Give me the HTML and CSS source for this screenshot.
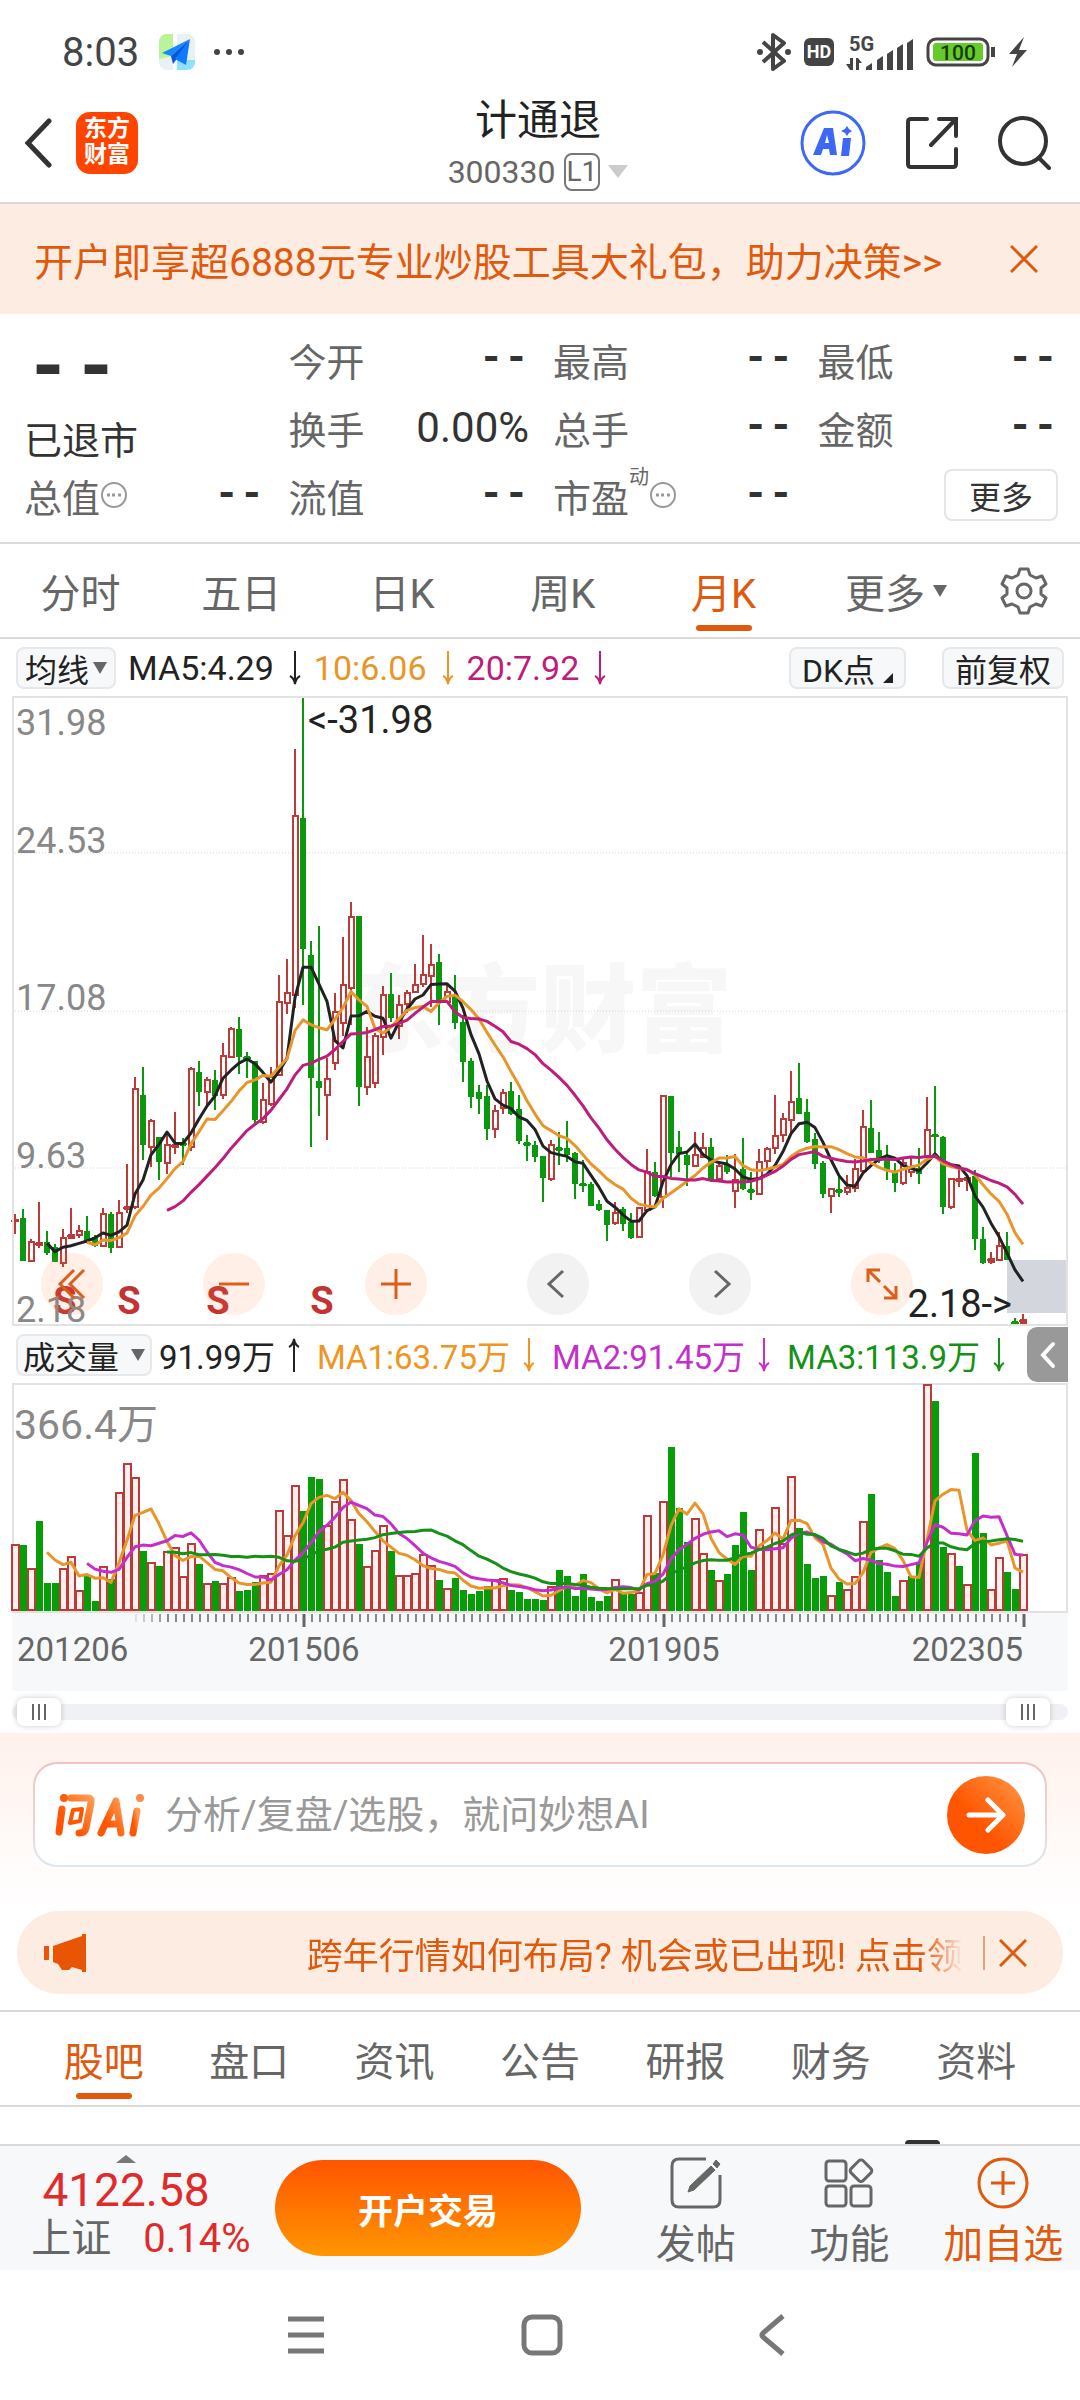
FILE: index.html
```html
<!DOCTYPE html>
<html lang="zh-CN">
<head>
  <meta charset="UTF-8" />
  <meta name="viewport" content="width=device-width, initial-scale=1" />
  <title>计通退 300330</title>
  <link rel="stylesheet" href="styles.css">
</head>
<body>
  <svg class="defs" width="0" height="0" aria-hidden="true">
    <symbol id="down" viewBox="0 0 14 36"><path d="M7 1v32M2 26q4 2 5 8q1-6 5-8" fill="none" stroke="currentColor" stroke-width="2" /></symbol>
    <symbol id="up" viewBox="0 0 14 36"><path d="M7 35V3M2 10q4-2 5-8q1 6 5 8" fill="none" stroke="currentColor" stroke-width="2" /></symbol>
    <symbol id="close" viewBox="0 0 28 28"><path d="M1 1l26 26M27 1L1 27" fill="none" stroke="currentColor" stroke-width="3" /></symbol>
    <symbol id="info" viewBox="0 0 28 28"><circle cx="14" cy="14" r="12" fill="none" stroke="#999" stroke-width="2" /><path d="M7 14h3M12 14h3M18 14h3" stroke="#999" stroke-width="3" /></symbol>
    <linearGradient id="fire" x1="0" y1="1" x2="1" y2="0"><stop offset="0.3" stop-color="#ff5500" /><stop offset="1" stop-color="#ff9a50" /></linearGradient>
  </svg>

  <div class="status">
    <span class="clock">8:03</span>
    <svg class="map-icon" width="36" height="36" viewBox="0 0 36 36">
      <rect width="36" height="36" rx="8" fill="#e9f1f2" />
      <path d="M8 0h6v22L0 25V8a8 8 0 0 1 8-8z" fill="#b9f39a" />
      <path d="M18 26h18v2a8 8 0 0 1-8 8H18z" fill="#8fe0ff" />
      <path d="M14 0h4v36h-4z" fill="#fff" />
      <path d="M31 5L3 19l9 3z" fill="#1388ff" /><path d="M31 5L12 22l2 8 3-4z" fill="#0a55d8" /><path d="M31 5L16 25l11 6z" fill="#0d7bff" />
    </svg>
    <svg width="32" height="8" viewBox="0 0 32 8" fill="#444"><circle cx="4" cy="4" r="3" /><circle cx="16" cy="4" r="3" /><circle cx="28" cy="4" r="3" /></svg>
    <div class="status-right">
      <svg width="36" height="38" viewBox="0 0 36 38"><path d="M7 9l21 19-11 8V2l11 8L7 29" fill="none" stroke="#444" stroke-width="4" stroke-linejoin="round" /><circle cx="4" cy="19" r="3" fill="#444" /><circle cx="32" cy="19" r="3" fill="#444" /></svg>
      <span class="hd">HD</span>
      <svg width="68" height="42" viewBox="0 -6 68 42" fill="#444">
        <text x="3" y="14" font-size="20" font-weight="700">5G</text>
        <path d="M4 21h3v12H4l-4-6h4zM10 33h3v-7h3l-4-5h-2z" />
        <path d="M20 33v-3l6-4v7zM31 23l6-4v14h-6zM41 17l6-4v20h-6zM51 11l6-4v26h-6zM61 6l6-4v31h-6z" />
      </svg>
      <svg width="70" height="32" viewBox="0 0 70 32">
        <rect x="2" y="3" width="60" height="26" rx="8" fill="#fff" stroke="#444" stroke-width="3" />
        <rect x="7" y="7" width="50" height="18" rx="3" fill="#66c92c" />
        <path d="M67 11v10" stroke="#444" stroke-width="4" />
        <text x="32" y="24" font-size="21" font-weight="500" text-anchor="middle" fill="#173c06">100</text>
      </svg>
      <svg width="20" height="30" viewBox="0 0 20 30"><path d="M16 0L1 17h8L4 30 19 13h-8z" fill="#444" /></svg>
    </div>
  </div>

  <header class="header">
    <div class="header-left">
      <button class="plain" aria-label="返回"><svg width="28" height="50" viewBox="0 0 28 50"><path d="M25 3L4 25l21 22" fill="none" stroke="#333" stroke-width="5" stroke-linecap="round" /></svg></button>
      <span class="logo">东方<br>财富</span>
    </div>
    <div class="header-title">
      <h1>计通退</h1>
      <p>300330 <span class="level">L1</span> <svg width="20" height="14" viewBox="0 0 20 14"><path d="M0 0h20L10 13z" fill="#ccc" /></svg></p>
    </div>
    <div class="header-right">
      <button class="plain" aria-label="AI助手"><svg width="66" height="66" viewBox="0 0 66 66">
        <circle cx="33" cy="33" r="31" fill="none" stroke="#3d68f5" stroke-width="3" />
        <path d="M24 18h9l4 27h-7l-1-6h-6l-2 6h-8zM27 25l-2 8h4z" fill="#3d68f5" fill-rule="evenodd" />
        <path d="M43 28h8l-2 18h-8zM47 16l2 3 3 2-3 2-2 3-2-3-4-2 4-2z" fill="#3d68f5" />
      </svg></button>
      <button class="plain" aria-label="分享"><svg width="52" height="52" viewBox="0 0 52 52"><path d="M21 2H5q-3 0-3 3v42q0 3 3 3h42q3 0 3-3V32M33 2h17v17M50 2L25 28" fill="none" stroke="#333" stroke-width="4" stroke-linecap="round" /></svg></button>
      <button class="plain" aria-label="搜索"><svg width="54" height="54" viewBox="0 0 54 54"><circle cx="25" cy="25" r="23" fill="none" stroke="#333" stroke-width="4" /><path d="M41 42l10 10" stroke="#333" stroke-width="4" stroke-linecap="round" /></svg></button>
    </div>
  </header>

  <div class="banner">
    <a href="#">开户即享超6888元专业炒股工具大礼包，助力决策&gt;&gt;</a>
    <button class="plain" aria-label="关闭"><svg width="28" height="28"><use href="#close" /></svg></button>
  </div>

  <section class="quote">
    <div class="price"><strong class="dash">--</strong><span>已退市</span></div>
    <div class="cell"><span>今开</span><b class="dash">--</b></div>
    <div class="cell"><span>最高</span><b class="dash">--</b></div>
    <div class="cell"><span>最低</span><b class="dash">--</b></div>
    <div class="cell"><span>换手</span><em>0.00%</em></div>
    <div class="cell"><span>总手</span><b class="dash">--</b></div>
    <div class="cell"><span>金额</span><b class="dash">--</b></div>
    <div class="cell"><span>总值</span><svg width="28" height="28"><use href="#info" /></svg><b class="dash">--</b></div>
    <div class="cell"><span>流值</span><b class="dash">--</b></div>
    <div class="cell"><span>市盈</span><sup>动</sup><svg width="28" height="28"><use href="#info" /></svg><b class="dash">--</b></div>
    <div class="cell"><button class="more">更多</button></div>
  </section>

  <nav class="periods">
    <a href="#">分时</a>
    <a href="#">五日</a>
    <a href="#">日K</a>
    <a href="#">周K</a>
    <a href="#" class="active">月K</a>
    <a href="#">更多<svg width="14" height="12" viewBox="0 0 14 12"><path d="M0 0h14L7 12z" fill="#666" /></svg></a>
    <button class="plain" aria-label="设置"><svg width="48" height="48" viewBox="0 0 48 48"><path d="M20 2h8l2 6 6 3 6-2 4 8-5 4v6l5 4-4 8-6-2-6 3-2 6h-8l-2-6-6-3-6 2-4-8 5-4v-6l-5-4 4-8 6 2 6-3z" fill="none" stroke="#666" stroke-width="3" stroke-linejoin="round" /><circle cx="24" cy="24" r="7" fill="none" stroke="#666" stroke-width="3" /></svg></button>
  </nav>

  <div class="legend">
    <button class="chip">均线<svg width="14" height="12" viewBox="0 0 14 12"><path d="M0 0h14L7 12z" fill="#666" /></svg></button>
    <span class="ma ma-black">MA5:4.29<svg width="14" height="36"><use href="#down" /></svg></span>
    <span class="ma ma-orange">10:6.06<svg width="14" height="36"><use href="#down" /></svg></span>
    <span class="ma ma-pink">20:7.92<svg width="14" height="36"><use href="#down" /></svg></span>
    <div class="legend-right">
      <button class="chip">DK点<svg class="corner" width="10" height="10" viewBox="0 0 10 10"><path d="M10 0v10H0z" fill="#222" /></svg></button>
      <button class="chip">前复权</button>
    </div>
  </div>

  <div class="chart">
    <svg id="kline" viewBox="0 0 1056 630"></svg>
    <div class="tools">
      <button aria-label="展开"><svg width="32" height="32" viewBox="0 0 32 32"><path d="M18 2L4 16l14 14M28 2L14 16l14 14" /></svg></button>
      <button aria-label="缩小"><svg width="32" height="32" viewBox="0 0 32 32"><path d="M1 16h30" /></svg></button>
      <button aria-label="放大"><svg width="32" height="32" viewBox="0 0 32 32"><path d="M1 16h30M16 1v30" /></svg></button>
      <button class="grey" aria-label="向左"><svg width="32" height="32" viewBox="0 0 32 32"><path d="M21 3L7 16l14 13" /></svg></button>
      <button class="grey" aria-label="向右"><svg width="32" height="32" viewBox="0 0 32 32"><path d="M11 3l14 13-14 13" /></svg></button>
      <button aria-label="全屏"><svg width="32" height="32" viewBox="0 0 32 32"><path d="M2 14V2h12M2 2l12 12M30 18v12H18M30 30L18 18" /></svg></button>
    </div>
  </div>

  <div class="legend legend-vol">
    <button class="chip">成交量<svg width="14" height="12" viewBox="0 0 14 12"><path d="M0 0h14L7 12z" fill="#666" /></svg></button>
    <span class="ma ma-black">91.99万<svg width="14" height="36"><use href="#up" /></svg></span>
    <span class="ma ma-amber">MA1:63.75万<svg width="14" height="36"><use href="#down" /></svg></span>
    <span class="ma ma-purple">MA2:91.45万<svg width="14" height="36"><use href="#down" /></svg></span>
    <span class="ma ma-green">MA3:113.9万<svg width="14" height="36"><use href="#down" /></svg></span>
    <button class="fold" aria-label="收起"><svg width="16" height="28" viewBox="0 0 16 28"><path d="M13 3L3 14l10 11" fill="none" stroke="#fff" stroke-width="4" stroke-linecap="round" /></svg></button>
  </div>

  <div class="chart">
    <svg id="volume" viewBox="0 0 1056 308"></svg>
  </div>

  <div class="range">
    <input type="range" min="0" max="100" value="0" aria-label="开始月份">
    <input type="range" min="0" max="100" value="100" aria-label="结束月份">
  </div>

  <section class="ask">
    <form class="ask-box">
      <svg class="ask-logo" width="90" height="44" viewBox="0 0 90 44">
        <g fill="none" stroke="url(#fire)" stroke-width="7" stroke-linecap="round" stroke-linejoin="round">
          <path d="M7 16L4 39M16 5h17q4 0 3 5l-5 25q-1 5-7 5" />
          <path d="M46 40L61 8l5 32M52 31h12" />
          <path d="M82 18l-4 22" />
        </g>
        <path d="M18 17l-3 13 10-2 2-12z" fill="none" stroke="#ff5500" stroke-width="4" stroke-linejoin="round" />
        <circle cx="9" cy="5" r="4" fill="#ff5c0a" /><circle cx="85" cy="5" r="4" fill="#ff8a4a" />
      </svg>
      <input type="text" placeholder="分析/复盘/选股，就问妙想AI" aria-label="问AI">
      <button class="send" aria-label="发送"><svg width="40" height="36" viewBox="0 0 40 36"><path d="M3 18h33M22 3l15 15-15 15" fill="none" stroke="#fff" stroke-width="5" stroke-linecap="round" stroke-linejoin="round" /></svg></button>
    </form>
  </section>

  <div class="notice">
    <svg width="44" height="38" viewBox="0 0 44 38" fill="#e85605"><path d="M0 12h5v14H0zM9 12L38 2V0h4v38h-4v-2l-10-3-3 3h-7l-4-6-5-2z" /></svg>
    <div class="notice-text"><a href="#">跨年行情如何布局? 机会或已出现! 点击领</a></div>
    <button class="plain" aria-label="关闭"><svg width="28" height="28"><use href="#close" /></svg></button>
  </div>

  <nav class="tabs">
    <a href="#" class="active">股吧</a>
    <a href="#">盘口</a>
    <a href="#">资讯</a>
    <a href="#">公告</a>
    <a href="#">研报</a>
    <a href="#">财务</a>
    <a href="#">资料</a>
  </nav>

  <main class="feed"><span class="feed-icon"></span></main>

  <footer class="bottom">
    <a href="#" class="index">
      <svg width="20" height="8" viewBox="0 0 20 8"><path d="M10 0l10 8H0z" fill="#777" /></svg>
      <strong>4122.58</strong>
      <span class="index-row"><span>上证</span><em>0.14%</em></span>
    </a>
    <button class="trade">开户交易</button>
    <div class="actions">
      <a href="#"><svg width="52" height="52" viewBox="0 0 52 52"><path d="M36 2H9q-7 0-7 7v34q0 7 7 7h34q7 0 7-7V18" fill="none" stroke="#666" stroke-width="3" /><path d="M41 9l4 4-21 20-6 2 2-6zM43 7l3-4 4 4-3 4z" fill="#666" stroke="#666" /></svg>发帖</a>
      <a href="#"><svg width="52" height="52" viewBox="0 0 52 52" fill="none" stroke="#666" stroke-width="3"><rect x="3" y="4" width="20" height="20" rx="3" /><rect x="3" y="29" width="20" height="20" rx="3" /><rect x="28" y="29" width="20" height="20" rx="3" /><rect x="30" y="5" width="17" height="17" rx="3" transform="rotate(45 38 13)" /></svg>功能</a>
      <a href="#" class="add"><svg width="52" height="52" viewBox="0 0 52 52" fill="none" stroke="#e05a0e" stroke-width="3"><circle cx="26" cy="26" r="24" /><path d="M14 26h24M26 14v24" /></svg>加自选</a>
    </div>
  </footer>

  <div class="sysnav">
    <button class="plain" aria-label="任务"><svg width="40" height="40" viewBox="0 0 40 40"><path d="M2 4h36M2 20h36M2 36h36" stroke="#777" stroke-width="5" /></svg></button>
    <button class="plain" aria-label="主页"><svg width="42" height="42" viewBox="0 0 42 42"><rect x="3" y="3" width="36" height="36" rx="8" fill="none" stroke="#777" stroke-width="5" /></svg></button>
    <button class="plain" aria-label="后退"><svg width="28" height="42" viewBox="0 0 28 42"><path d="M25 2L5 19q-2 2 0 4l20 17" fill="none" stroke="#777" stroke-width="5" /></svg></button>
  </div>

  <script src="chart.js"></script>
</body>
</html>
```
FILE: styles.css
```css
* {
  box-sizing: border-box;
  margin: 0;
  padding: 0;
}
body {
  font-family: Roboto, "Noto Sans CJK SC", sans-serif;
  background: #fff;
  color: #333;
  min-height: 100vh;
  display: flex;
  flex-direction: column;
}
a {
  color: inherit;
  text-decoration: none;
}
em {
  font-style: normal;
}
svg {
  display: block;
  flex: none;
}
button,
input {
  font-family: inherit;
  color: inherit;
  border: none;
}
button {
  cursor: pointer;
}
.defs {
  position: absolute;
}
.plain {
  background: none;
  display: flex;
  align-items: center;
  justify-content: center;
}

/* status bar */
.status {
  height: 92px;
  padding: 12px 52px 0 62px;
  display: flex;
  align-items: center;
  gap: 18px;
}
.clock {
  font-size: 40px;
  color: #444;
}
.map-icon {
  margin-left: 2px;
}
.status-right {
  margin-left: auto;
  display: flex;
  align-items: center;
  gap: 12px;
}
.hd {
  width: 30px;
  height: 28px;
  border-radius: 6px;
  background: #444;
  color: #fff;
  font-size: 18px;
  font-weight: 700;
  line-height: 28px;
  text-align: center;
}

/* header */
.header {
  padding: 0 28px 8px 24px;
  display: grid;
  grid-template-columns: 1fr auto 1fr;
  align-items: center;
  border-bottom: 2px solid #d9d9d9;
}
.header-left,
.header-right {
  display: flex;
  align-items: center;
}
.header-left {
  gap: 24px;
}
.header-right {
  justify-content: flex-end;
  gap: 40px;
}
.logo {
  width: 62px;
  height: 62px;
  border-radius: 14px;
  background: #ff4400;
  color: #fff;
  font-size: 23px;
  font-weight: 700;
  line-height: 26px;
  padding-top: 4px;
  text-align: center;
}
.header-title h1 {
  font-size: 42px;
  line-height: 58px;
  font-weight: 400;
  text-align: center;
  color: #222;
}
.header-title p {
  display: flex;
  align-items: center;
  gap: 8px;
  font-size: 32px;
  line-height: 44px;
  color: #666;
}
.level {
  border: 2px solid #777;
  border-radius: 8px;
  padding: 0 1px;
  font-size: 28px;
  line-height: 34px;
}

/* promo banner */
.banner {
  height: 110px;
  padding: 0 42px 0 34px;
  display: flex;
  align-items: center;
  justify-content: space-between;
  background: #fcece2;
  color: #e05a0e;
  font-size: 39px;
  white-space: nowrap;
}

/* quote */
.quote {
  padding: 11px 22px 13px 24px;
  display: grid;
  grid-template-columns: repeat(4, 1fr);
  grid-auto-rows: 68px;
  column-gap: 24px;
  font-size: 38px;
  border-bottom: 2px solid #d9d9d9;
}
.price {
  grid-row: span 2;
  display: flex;
  flex-direction: column;
}
.price strong {
  font-size: 80px;
  line-height: 88px;
}
.price span {
  line-height: 56px;
}
.dash {
  font-family: "Liberation Mono", monospace;
}
.cell {
  display: flex;
  align-items: center;
  color: #666;
  white-space: nowrap;
}
.cell b,
.cell em {
  margin-left: auto;
  font-size: 42px;
  color: #333;
}
.cell sup {
  font-size: 20px;
  align-self: flex-start;
}
.more {
  margin-left: auto;
  width: 114px;
  height: 52px;
  border: 2px solid #e5e5e5;
  border-radius: 8px;
  background: #fff;
  color: #333;
  font-size: 32px;
}

/* period tabs */
.periods {
  height: 95px;
  padding-right: 20px;
  display: grid;
  grid-template-columns: repeat(5, 1fr) 184px 72px;
  border-bottom: 2px solid #d9d9d9;
}
.periods a,
.tabs a {
  position: relative;
  display: flex;
  align-items: center;
  justify-content: center;
  gap: 8px;
  font-size: 40px;
  color: #666;
}
.periods a.active,
.tabs a.active {
  color: #e05a0e;
}
.periods a.active::after,
.tabs a.active::after {
  content: "";
  position: absolute;
  left: 50%;
  bottom: 6px;
  width: 56px;
  height: 6px;
  margin-left: -28px;
  border-radius: 3px;
  background: #e05a0e;
}

/* chart legends */
.legend {
  height: 57px;
  padding: 0 16px;
  display: flex;
  align-items: center;
  gap: 12px;
  font-size: 34px;
  white-space: nowrap;
}
.chip {
  height: 42px;
  padding: 0 7px;
  display: flex;
  align-items: center;
  gap: 4px;
  border: 2px solid #e6e8ec;
  border-radius: 8px;
  background: #f7f8fa;
  color: #222;
  font-size: 32px;
}
.corner {
  align-self: flex-end;
  margin-bottom: 4px;
}
.ma {
  display: flex;
  align-items: center;
  gap: 14px;
}
.ma-black { color: #222; }
.ma-orange { color: #e8962a; }
.ma-pink { color: #bd1d7b; }
.ma-amber { color: #f0961e; }
.ma-purple { color: #c42fcb; }
.ma-green { color: #159215; }
.legend-right {
  margin-left: auto;
  display: flex;
  gap: 36px;
}
.legend-right .chip {
  padding: 0 11px;
  gap: 8px;
}
.legend-vol {
  padding-right: 12px;
  gap: 16px;
  font-size: 33px;
}
.legend-vol .chip {
  padding: 0 5px;
  gap: 12px;
}
.legend-vol .ma {
  gap: 12px;
}
.legend-vol .ma-black {
  margin-left: -9px;
}
.fold {
  flex: none;
  margin-left: auto;
  width: 41px;
  height: 55px;
  border-radius: 10px 0 0 10px;
  background: #999;
  display: flex;
  align-items: center;
  justify-content: center;
}

/* charts */
.chart {
  position: relative;
  margin: 0 12px;
}
.chart > svg {
  width: 100%;
  height: auto;
  overflow: visible;
}
.frame {
  fill: none;
  stroke: #e2e2e2;
  stroke-width: 2;
}
.grid {
  stroke: #d4d4d4;
  stroke-dasharray: 1 2;
}
.watermark {
  font-size: 96px;
  font-weight: 900;
  fill: #f7f7f7;
}
.scale {
  font-size: 36px;
  fill: #888;
}
.mark {
  font-size: 38px;
  fill: #222;
}
.split {
  font-size: 38px;
  font-weight: 700;
  fill: #c43333;
}
.unit {
  font-size: 41px;
  fill: #888;
}
.month {
  font-size: 33px;
  fill: #666;
}
.gap-zone {
  fill: #d3d7dd;
}
.up {
  fill: #fff;
  stroke: #bc3a38;
  stroke-width: 2;
}
.up-vol {
  fill: #fff0ee;
  stroke: #bc3a38;
  stroke-width: 2;
}
.down {
  fill: #0a980e;
  stroke: #0a980e;
  stroke-width: 2;
}
.down-vol {
  fill: #069d06;
}
.line {
  fill: none;
  stroke-width: 3;
  stroke-linejoin: round;
}
.tick {
  stroke: #888;
  stroke-width: 2;
}
.tick-major {
  stroke: #666;
  stroke-width: 3;
}
.axis {
  fill: #f7f8fa;
}
.tools {
  position: absolute;
  left: 29px;
  bottom: 11px;
  display: flex;
  gap: 100px;
}
.tools button {
  width: 62px;
  height: 62px;
  border-radius: 50%;
  background: rgba(255, 120, 50, 0.12);
  color: #d9601c;
  display: flex;
  align-items: center;
  justify-content: center;
}
.tools button.grey {
  background: #f2f2f2;
  color: #666;
}
.tools svg {
  fill: none;
  stroke: currentColor;
  stroke-width: 3;
}

/* range slider */
.range {
  height: 16px;
  margin: 13px 12px;
  padding: 0 18px 0 5px;
  display: flex;
  align-items: center;
  border-radius: 8px;
  background: #f0f1f4;
}
.range input {
  flex: 1;
  height: 28px;
  background: none;
  -webkit-appearance: none;
  appearance: none;
}
.range input::-webkit-slider-thumb {
  -webkit-appearance: none;
  width: 44px;
  height: 28px;
  border-radius: 7px;
  box-shadow: 0 0 6px rgba(0, 0, 0, 0.2);
  background:
    linear-gradient(#666, #666) 15px 6px / 2px 16px no-repeat,
    linear-gradient(#666, #666) 21px 6px / 2px 16px no-repeat,
    linear-gradient(#666, #666) 27px 6px / 2px 16px no-repeat,
    #fff;
}

/* ask ai */
.ask {
  padding: 29px 33px 44px;
  background: linear-gradient(#fff1ec, #fff);
}
.ask-box {
  height: 105px;
  padding: 0 20px;
  display: flex;
  align-items: center;
  gap: 20px;
  border: 2px solid transparent;
  border-radius: 24px;
  background:
    linear-gradient(#fff, #fff) padding-box,
    linear-gradient(#f1c3b8, #dfe6ef) border-box;
}
.ask-box input {
  flex: 1;
  min-width: 0;
  height: 60px;
  font-size: 38px;
  background: none;
  outline: none;
}
.ask-box input::placeholder {
  color: #999;
}
.send {
  width: 78px;
  height: 78px;
  border-radius: 50%;
  background: linear-gradient(45deg, #ff5500 40%, #ff9a48);
  display: flex;
  align-items: center;
  justify-content: center;
}

/* scrolling notice */
.notice {
  height: 83px;
  margin: 0 17px 16px;
  padding: 0 36px 0 27px;
  display: flex;
  align-items: center;
  border-radius: 42px;
  background: #fcece2;
  color: #e05a0e;
  font-size: 36px;
}
.notice-text {
  flex: 1;
  overflow: hidden;
  white-space: nowrap;
  text-align: right;
  margin-right: 20px;
  -webkit-mask-image: linear-gradient(to left, transparent, #000 40px);
  mask-image: linear-gradient(to left, transparent, #000 40px);
}
.notice .plain {
  height: 34px;
  padding-left: 14px;
  border-left: 2px solid #e9a27b;
}

/* section tabs */
.tabs {
  height: 97px;
  padding: 0 31px;
  display: grid;
  grid-template-columns: repeat(7, 1fr);
  border-top: 2px solid #d9d9d9;
  border-bottom: 2px solid #d9d9d9;
}
.feed {
  flex: 1 0 36px;
  display: flex;
  justify-content: flex-end;
  align-items: flex-end;
  padding-right: 140px;
}
.feed-icon {
  width: 35px;
  height: 4px;
  border-radius: 6px 6px 0 0;
  background: #333;
}

/* bottom bar */
.bottom {
  height: 126px;
  display: flex;
  align-items: center;
  border-top: 2px solid #d9d9d9;
  background: #f7f8fa;
}
.index {
  width: 275px;
  padding-right: 23px;
  display: flex;
  flex-direction: column;
  align-items: center;
  color: #e02b2b;
}
.index strong {
  font-size: 46px;
  font-weight: 400;
  line-height: 54px;
}
.index-row {
  margin-left: 30px;
  display: flex;
  gap: 32px;
  font-size: 40px;
  line-height: 44px;
}
.index-row span {
  color: #666;
}
.trade {
  width: 306px;
  height: 96px;
  border-radius: 48px;
  background: linear-gradient(#ff5500, #ff9500);
  color: #fff;
  font-size: 35px;
  font-weight: 700;
}
.actions {
  flex: 1;
  margin-left: 38px;
  padding-top: 12px;
  display: grid;
  grid-template-columns: repeat(3, 1fr);
}
.actions a {
  display: flex;
  flex-direction: column;
  align-items: center;
  gap: 10px;
  font-size: 40px;
  line-height: 52px;
  color: #666;
  white-space: nowrap;
}
.actions a.add {
  color: #e05a0e;
}

/* system buttons */
.sysnav {
  height: 130px;
  padding: 0 294px 0 286px;
  display: flex;
  align-items: center;
  justify-content: space-between;
}
```
FILE: chart.js
```js
// [direction, high, body top, body bottom, low, volume, volume direction if different]
const months = [
  ["r",518,524,525,538,67],["g",513,523,564,564,66],["r",543,546,565,565,43],["r",506,547,549,552,90,"g"],
  ["g",535,547,556,559,28],["g",548,552,565,566,28],["r",533,542,567,571,43],["r",512,539,542,543,55],
  ["r",529,535,539,542,21],["g",520,536,544,547,35],["g",539,542,549,551,10],["r",512,518,550,551,45],
  ["g",516,519,551,557,32],["r",504,517,551,552,119],["r",468,511,513,517,148],["r",381,393,511,513,134],
  ["g",371,400,448,464,60],["r",423,425,451,471,49],["g",441,442,465,484,45],["r",438,449,467,478,60],
  ["r",416,449,451,458,64],["g",442,447,449,469,35,"r"],["r",371,373,451,455,68],["g",365,377,395,410,47],
  ["r",381,384,396,409,28],["g",374,385,399,414,30],["r",347,360,399,403,28],["r",331,333,361,361,34],
  ["g",321,334,360,378,20],["g",356,361,363,382,21],["g",365,366,423,427,29],["r",387,404,426,428,36],
  ["r",371,381,408,410,38],["r",279,306,379,380,101],["r",263,297,307,318,76],["r",53,120,299,312,126],
  ["g",0,123,252,309,100],["g",245,260,381,451,134],["g",230,386,391,420,132],["r",362,383,399,444,86],
  ["r",297,316,367,374,110],["r",241,289,327,340,132],["r",206,221,292,329,92],["g",221,221,390,410,67],
  ["r",331,361,391,399,45],["r",337,340,387,392,61],["r",290,299,341,359,86],["g",277,299,321,326,60],
  ["r",299,309,330,343,36],["r",294,297,308,317,36],["r",268,289,296,297,38],["r",239,279,288,291,57],
  ["r",248,269,280,311,46],["g",258,267,306,329,31],["r",289,296,306,307,23],["g",279,301,326,333,33],
  ["g",319,327,365,386,21],["g",362,366,400,412,17],["g",389,397,402,418,20],["g",389,401,432,444,25],
  ["r",409,415,433,442,32],["r",393,397,412,418,33],["g",386,396,417,419,21],["g",399,414,444,448,19],
  ["g",439,447,449,465,12],["g",445,450,460,466,12],["g",460,461,481,506,11],["r",444,449,483,485,25],
  ["g",436,452,454,469,41],["g",425,453,458,466,35],["g",456,458,487,503,15],["g",464,488,489,496,37],
  ["g",486,489,509,509,14],["g",504,509,513,515,10],["g",514,515,528,545,15],["r",506,517,527,529,32],
  ["g",511,514,527,535,18],["g",517,527,541,543,17],["r",511,512,541,542,19],["r",453,476,514,515,96],
  ["g",466,477,499,501,38],["r",399,400,501,512,110],["g",401,401,456,481,164],["g",435,452,457,476,103],
  ["g",456,460,468,490,69],["r",436,459,470,471,93],["r",437,452,461,462,58],["g",442,452,484,486,41],
  ["r",466,470,483,485,31],["g",459,469,475,478,37],["r",458,484,495,512,66,"g"],["g",442,474,492,494,99],
  ["g",476,494,496,504,41],["r",453,466,498,499,82],["r",451,453,465,472,64],["r",399,440,452,458,104],
  ["r",417,423,439,446,68],["r",375,406,424,439,135],["g",367,403,417,418,83],["g",403,417,445,447,47],
  ["g",437,444,467,473,33],["g",465,468,497,502,35],["r",492,493,500,517,16],["g",481,494,496,501,29],
  ["r",479,492,496,499,22],["r",463,473,492,496,35],["r",414,431,475,476,90],["g",404,433,456,457,117],
  ["g",436,455,464,467,51],["g",449,461,474,484,39],["g",467,476,486,496,15],["r",461,467,487,489,31],
  ["r",461,471,476,481,35,"g"],["g",452,473,477,488,48],["r",401,434,461,462,227],["g",390,439,440,460,210],
  ["g",440,442,510,518,64],["r",482,483,511,513,58],["r",474,483,485,491,45,"g"],["r",479,482,484,495,27],
  ["g",474,481,542,554,158],["g",531,544,566,568,78],["r",556,563,566,568,22],["r",536,550,564,565,54],
  ["g",536,551,563,564,39],["g",622,626,627,629,22],["r",618,624,627,628,57]
];

const step = 8;
const cx = i => 3 + i * step;

function average(values, n, color) {
  const points = [];
  for (let i = n - 1; i < values.length; i++) {
    const part = values.slice(i - n + 1, i + 1);
    points.push(cx(i) + "," + (part.reduce((a, b) => a + b, 0) / n).toFixed(1));
  }
  return `<polyline class="line" stroke="${color}" points="${points.join(" ")}"/>`;
}

function drawKline() {
  let out = '<text class="watermark" x="336" y="348">东方财富</text>';
  [157, 315, 472].forEach(y => {
    out += `<line class="grid" x1="0" x2="1056" y1="${y}" y2="${y}"/>`;
  });
  out += '<rect class="gap-zone" x="995" y="564" width="60" height="53"/>';

  months.forEach(([dir, high, top, bottom, low], i) => {
    const x = cx(i);
    const cls = dir === "r" ? "up" : "down";
    out += `<path class="${cls}" d="M${x} ${high}V${top}M${x} ${bottom}V${low}"/>`;
    out += `<rect class="${cls}" x="${x - 2}" y="${top}" width="${dir === "r" ? 5 : 4}" height="${bottom - top}"/>`;
    if (bottom - top < 4) {
      out += `<path class="${cls}" d="M${x - 4} ${top + 1}h8"/>`;
    }
  });

  const close = months.map(m => m[0] === "r" ? m[2] : m[3]);
  out += average(close, 5, "#222");
  out += average(close, 10, "#e8962a");
  out += average(close, 20, "#bd1d7b");

  [53, 117, 206, 310].forEach(x => {
    out += `<text class="split" text-anchor="middle" x="${x}" y="618">S</text>`;
  });
  [["31.98", 39], ["24.53", 157], ["17.08", 314], ["9.63", 472], ["2.18", 626]].forEach(([t, y]) => {
    out += `<text class="scale" x="4" y="${y}">${t}</text>`;
  });
  out += '<text class="mark" x="296" y="37">&lt;-31.98</text>';
  out += '<text class="mark" x="1000" y="621" text-anchor="end">2.18-&gt;</text>';
  out += '<rect class="frame" x="1" y="1" width="1054" height="628"/>';
  document.getElementById("kline").innerHTML = out;
}

function drawVolume() {
  const base = 228;
  let out = '<rect class="axis" x="0" y="230" width="1056" height="78"/>';
  out += '<rect class="frame" x="1" y="1" width="1054" height="228"/>';

  months.forEach((m, i) => {
    const x = cx(i);
    if ((m[6] || m[0]) === "r") {
      out += `<rect class="up-vol" x="${x - 3}" y="${base - m[5] + 1}" width="7" height="${m[5] - 2}"/>`;
    } else {
      out += `<rect class="down-vol" x="${x - 3}" y="${base - m[5]}" width="7" height="${m[5]}"/>`;
    }
    if (i > 14) {
      const major = [36, 81, 126].includes(i);
      out += `<line class="${major ? "tick-major" : "tick"}" opacity="${Math.min(1, (i - 14) / 5)}" x1="${x + 1}" x2="${x + 1}" y1="231" y2="${major ? 244 : 239}"/>`;
    }
  });

  const y = months.map(m => base - m[5]);
  out += average(y, 5, "#e8962a");
  out += average(y, 10, "#c42fcb");
  out += average(y, 20, "#159215");

  out += '<text class="unit" x="2" y="56">366.4万</text>';
  out += '<text class="month" x="5" y="278">201206</text>';
  out += '<text class="month" x="292" y="278" text-anchor="middle">201506</text>';
  out += '<text class="month" x="652" y="278" text-anchor="middle">201905</text>';
  out += '<text class="month" x="1011" y="278" text-anchor="end">202305</text>';
  document.getElementById("volume").innerHTML = out;
}

drawKline();
drawVolume();
```
